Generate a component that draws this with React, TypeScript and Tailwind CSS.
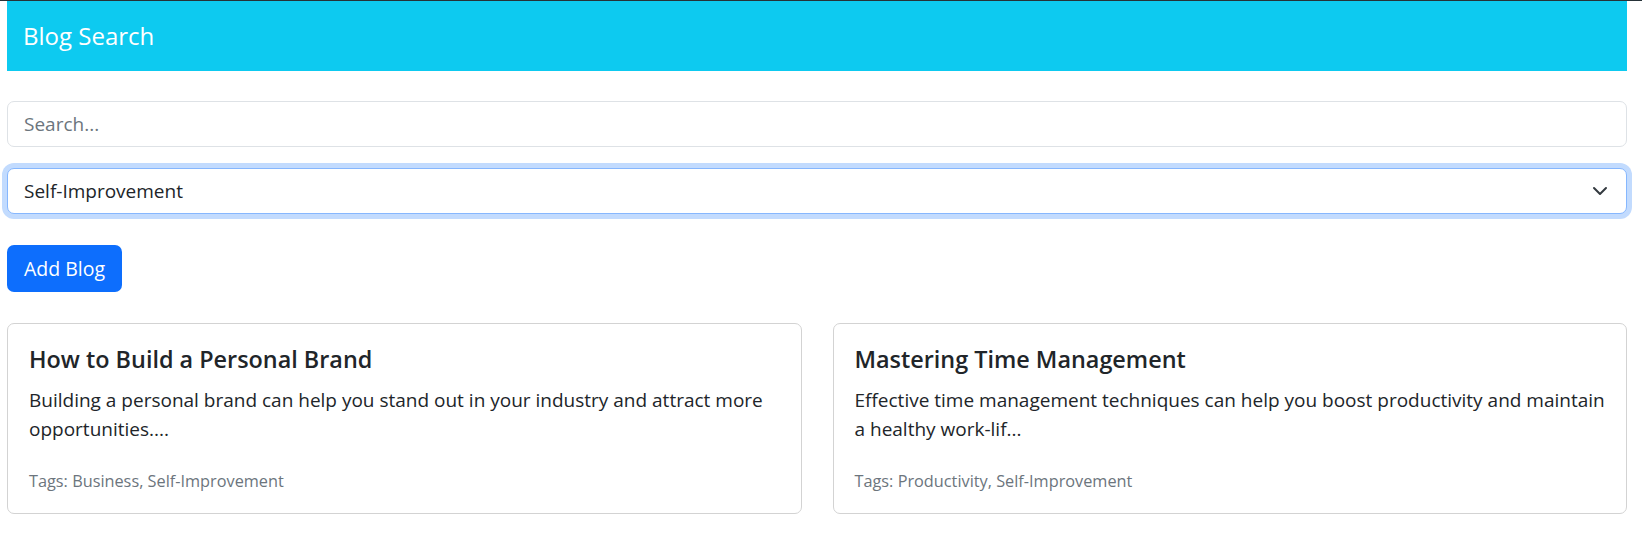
import { useState } from 'react'

type Blog = {
	id: number
	title: string
	excerpt: string
	tags: string[]
}

const blogs: Blog[] = [
	{
		id: 1,
		title: 'How to Build a Personal Brand',
		excerpt:
			'Building a personal brand can help you stand out in your industry and attract more opportunities....',
		tags: ['Business', 'Self-Improvement'],
	},
	{
		id: 2,
		title: 'Mastering Time Management',
		excerpt:
			'Effective time management techniques can help you boost productivity and maintain a healthy work-lif...',
		tags: ['Productivity', 'Self-Improvement'],
	},
]

const categories = ['All', 'Business', 'Productivity', 'Self-Improvement', 'Technology']

export default function App() {
	const [query, setQuery] = useState('')
	const [category, setCategory] = useState('Self-Improvement')

	return (
		<div className="min-h-screen border-t border-[#263238] bg-white font-['Open_Sans',sans-serif] text-[#212529]">
			<div className="pl-[7px] pr-[15px]">
				<header className="flex h-[70px] items-center bg-[#0dcaf0] pl-4">
					<h1 className="text-[24px] leading-[70px] text-white">Blog Search</h1>
				</header>

				<div className="mt-[30px] flex flex-col gap-[21px]">
					<input
						type="text"
						value={query}
						onChange={(e) => setQuery(e.target.value)}
						placeholder="Search..."
						className="h-[46px] w-full rounded-[7px] border border-[#dee2e6] px-4 text-[19px] text-[#212529] outline-none placeholder:text-[#6c757d]"
					/>
					<div className="relative">
						<select
							value={category}
							onChange={(e) => setCategory(e.target.value)}
							className="h-[46px] w-full appearance-none rounded-[7px] border border-[#86b7fe] bg-white px-4 text-[19px] text-[#212529] shadow-[0_0_0_5px_#c2dbfe] outline-none"
						>
							{categories.map((c) => (
								<option key={c} value={c}>
									{c}
								</option>
							))}
						</select>
						<svg
							className="pointer-events-none absolute right-[19px] top-1/2 h-[16px] w-[16px] -translate-y-1/2"
							viewBox="0 0 16 16"
							fill="none"
							stroke="#343a40"
							strokeWidth="2"
							strokeLinecap="round"
							strokeLinejoin="round"
						>
							<path d="M2 5l6 6 6-6" />
						</svg>
					</div>
				</div>

				<button className="mt-[31px] h-[47px] rounded-[7px] bg-[#0d6efd] px-[17px] text-[19.5px] text-white">
					Add Blog
				</button>

				<div className="mt-[31px] grid grid-cols-2 gap-[31px]">
					{blogs.map((blog) => (
						<div
							key={blog.id}
							className="h-[191px] rounded-[7px] border border-[#d3d3d3] px-[21px] pt-[21px]"
						>
							<h5 className="text-[23.4px] font-semibold leading-[29px]">{blog.title}</h5>
							<p className="mt-3 text-[19px] leading-[29px]">{blog.excerpt}</p>
							<p className="mt-[25px] text-[16.3px] leading-[24px] text-[#6c757d]">
								Tags: {blog.tags.join(', ')}
							</p>
						</div>
					))}
				</div>
			</div>
		</div>
	)
}
